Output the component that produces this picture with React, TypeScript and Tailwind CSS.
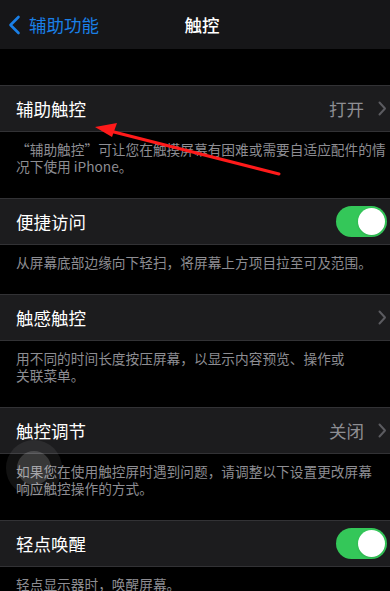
import React from "react";

const font = { fontFamily: '"Noto Sans CJK SC", "Noto Sans", sans-serif' };

function Chevron() {
  return (
    <svg width="9" height="15" viewBox="0 0 9 15" className="ml-[14px]">
      <path d="M1.5 1.5 L7 7.5 L1.5 13.5" stroke="#5b5b60" strokeWidth="2" fill="none" strokeLinecap="round" strokeLinejoin="round" />
    </svg>
  );
}

function Toggle() {
  return (
    <div className="w-[51px] h-[31px] rounded-full bg-[#34c759] flex items-center justify-end pr-[2px]">
      <div className="w-[27px] h-[27px] rounded-full bg-white shadow" />
    </div>
  );
}

function Row({ label, value, chevron, toggle }: { label: string; value?: string; chevron?: boolean; toggle?: boolean }) {
  return (
    <div className="h-[46.5px] bg-[#1c1c1e] border-y border-[#323235] flex items-center pl-4 pr-[17px]">
      <div className="flex-1 text-[17.5px] text-white leading-none">{label}</div>
      {value && <div className="text-[17.5px] text-[#8e8e93] leading-none">{value}</div>}
      {chevron && <Chevron />}
      {toggle && <Toggle />}
    </div>
  );
}

function Desc({ lines }: { lines: string[] }) {
  return (
    <div className="pl-4 pr-[20px] pt-[9px] pb-[23.5px] text-[13.7px] leading-[17px] text-[#8d8d92] flex flex-col">
      {lines.map((l, i) => (
        <span key={i} className="whitespace-nowrap">{l}</span>
      ))}
    </div>
  );
}

export default function App() {
  return (
    <div className="w-[390px] h-[591px] overflow-hidden bg-black relative" style={font}>
      <div className="w-[404px]">
        <div className="h-[49px] bg-[#161618] flex items-center relative">
          <div className="flex items-center pl-[8px] text-[#1a7fe6]">
            <svg width="13" height="20" viewBox="0 0 13 20">
              <path d="M10.5 2 L2.5 10 L10.5 18" stroke="#1a7fe6" strokeWidth="2.6" fill="none" strokeLinecap="round" strokeLinejoin="round" />
            </svg>
            <span className="ml-[8px] text-[17.5px] leading-none">辅助功能</span>
          </div>
          <div className="absolute left-0 right-0 text-center text-white text-[17.5px] font-medium leading-none pointer-events-none">触控</div>
        </div>
        <div className="h-[36px]" />
        <Row label="辅助触控" value="打开" chevron />
        <Desc lines={["“辅助触控”可让您在触摸屏幕有困难或需要自适应配件的情", "况下使用 iPhone。"]} />
        <Row label="便捷访问" toggle />
        <Desc lines={["从屏幕底部边缘向下轻扫，将屏幕上方项目拉至可及范围。"]} />
        <Row label="触感触控" chevron />
        <Desc lines={["用不同的时间长度按压屏幕，以显示内容预览、操作或", "关联菜单。"]} />
        <Row label="触控调节" value="关闭" chevron />
        <Desc lines={["如果您在使用触控屏时遇到问题，请调整以下设置更改屏幕", "响应触控操作的方式。"]} />
        <Row label="轻点唤醒" toggle />
        <Desc lines={["轻点显示器时，唤醒屏幕。"]} />
      </div>

      {/* assistive touch ghost */}
      <div className="absolute left-[6px] top-[440px] w-[56px] h-[56px] rounded-full bg-[#ffffff]/[0.07] flex items-center justify-center">
        <div className="w-[34px] h-[34px] rounded-full bg-[#ffffff]/[0.16]" />
      </div>

      {/* red annotation arrow */}
      <svg className="absolute left-0 top-0 pointer-events-none" width="390" height="591">
        <line x1="279" y1="174" x2="110" y2="131" stroke="#ff1a1a" strokeWidth="3" strokeLinecap="round" />
        <polygon points="95,127 117,123 112,137" fill="#ff1a1a" />
      </svg>
    </div>
  );
}
